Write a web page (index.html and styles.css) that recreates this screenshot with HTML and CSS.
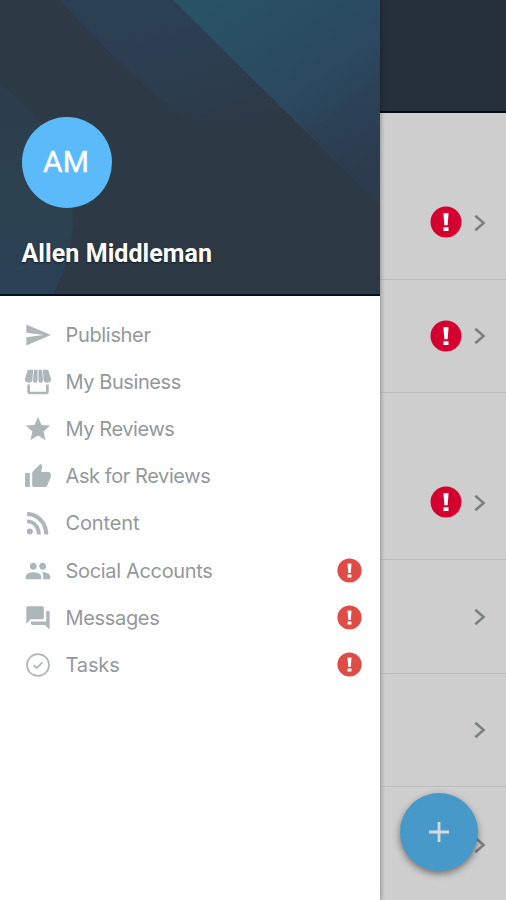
FILE: index.html
```html
<!DOCTYPE html>
<html lang="en">
<head>
<meta charset="utf-8">
<title>Navigation</title>
<link rel="stylesheet" href="styles.css">
</head>
<body>
<svg class="defs" width="0" height="0" aria-hidden="true">
  <symbol id="alert" viewBox="0 0 32 32"><circle cx="16" cy="16" r="15.5" fill="currentColor"/><path class="mark" d="M13.400 7.500q2.600-.9 5.200 0l-1 11.800h-3.200zM13.500 21.200h5v3.700h-5z"/></symbol>
  <symbol id="chevron" viewBox="0 0 12 18"><path d="M1.300 1.700 9.600 9l-8.300 7.300" fill="none" stroke="currentColor" stroke-width="2.500"/></symbol>
</svg>
<div class="screen">
  <aside class="drawer">
    <header class="profile">
      <svg class="backdrop" viewBox="0 0 380 294" preserveAspectRatio="none" aria-hidden="true">
        <defs>
          <linearGradient id="beam" gradientUnits="userSpaceOnUse" x1="215" y1="0" x2="340" y2="180"><stop offset="0" stop-color="#295266"/><stop offset=".55" stop-color="#2b4960"/><stop offset="1" stop-color="#2c3c4d"/></linearGradient>
          <linearGradient id="band" gradientUnits="userSpaceOnUse" x1="180" y1="0" x2="220" y2="135"><stop offset="0" stop-color="#2c4054"/><stop offset=".5" stop-color="#2c3e50"/><stop offset="1" stop-color="#2d3945"/></linearGradient>
          <linearGradient id="disc" x1="0" y1="0" x2="0" y2="1"><stop offset="0" stop-color="#2c3d4d"/><stop offset=".6" stop-color="#2c4250"/><stop offset="1" stop-color="#2c4057"/></linearGradient>
          <linearGradient id="fold" gradientUnits="userSpaceOnUse" x1="350" y1="72" x2="370" y2="205"><stop offset="0" stop-color="#2c425b"/><stop offset="1" stop-color="#2d3a48"/></linearGradient>
        </defs>
        <path d="M60 0H173L306 130Q222 145 166 103Q130 76 60 0z" fill="url(#band)"/>
        <path d="M173 0H380V205z" fill="url(#beam)"/>
        <path d="M380 72 326 119Q314 128 300 126L380 205z" fill="url(#fold)" opacity=".6"/>
        <path d="M0 84Q72 138 73 222Q71 260 53 294H0z" fill="url(#disc)"/>
      </svg>
      <div class="avatar"><span>AM</span></div>
      <div class="name">Allen Middleman</div>
    </header>
    <nav class="menu">
      <a class="item"><svg class="icon" viewBox="0 0 24 24"><path d="M2.010 21 23 12 2.010 3 2 10l15 2-15 2z"/></svg><span class="label">Publisher</span></a>
      <a class="item"><svg class="icon" viewBox="0 0 24 24"><path d="M3.300 1.500h4.500l-.5 8.600q-.3 2.600-3 2.600-3.800-.1-3.500-3.500zM8.500 1.500h3.100v8.700q-.1 2.500-2 2.500-2-.2-1.800-2.500zM12.400 1.500h3.100l.7 8.700q.2 2.300-1.800 2.500-1.900 0-2-2.500zM16.200 1.500h4.500l2.500 7.700q.3 3.400-3.500 3.500-2.700 0-3-2.600zM2.800 14.200h2.300v6.100h13.800v-6.100h2.300v6.300q0 2-2 2H4.800q-2 0-2-2z"/></svg><span class="label tight">My Business</span></a>
      <a class="item"><svg class="icon" viewBox="0 0 24 24"><path d="M12 17.600 18.500 21.600l-1.700-7.500 5.700-5-7.500-.6L12 1.600 9 8.500l-7.500.6 5.700 5-1.700 7.500z"/></svg><span class="label tight">My Reviews</span></a>
      <a class="item"><svg class="icon" viewBox="0 0 24 24"><path d="M1 21.500h4v-12H1v12zm22-11c0-1.100-.9-2-2-2h-6.310l.95-4.570.03-.32c0-.41-.17-.79-.44-1.060L14.170 1.500 7.590 8.090C7.220 8.450 7 8.950 7 9.500v10c0 1.100.9 2 2 2h9c.83 0 1.540-.5 1.840-1.220l3.020-7.050c.09-.23.14-.47.14-.73z"/></svg><span class="label tight">Ask for Reviews</span></a>
      <a class="item"><svg class="icon" viewBox="0 0 24 24"><circle cx="5" cy="19.300" r="2.600"/><path d="M2.600 2.500v3.400c8.500 0 14.800 7 14.800 15.900h3.500C20.900 11 12.700 2.500 2.600 2.500zm0 6.500v3.300c4.900 0 8.400 4.100 8.400 9.500h3.400C14.400 14.500 9.500 9 2.600 9z"/></svg><span class="label loose">Content</span></a>
      <a class="item"><svg class="icon" viewBox="0 0 24 24"><path d="M16 11c1.660 0 2.990-1.340 2.990-3S17.660 5 16 5s-3 1.340-3 3 1.340 3 3 3zm-8 0c1.660 0 2.990-1.340 2.990-3S9.660 5 8 5 5 6.340 5 8s1.340 3 3 3zm0 2c-2.330 0-6.500 1.170-6.500 3.500V19h13.200v-2.500c0-2.330-4.370-3.500-6.700-3.500zm8 0c-.29 0-.62.020-.97.050 1.160.84 1.470 1.970 1.470 3.450V19h6v-2.500c0-2.330-4.170-3.500-6.500-3.500z"/></svg><span class="label">Social Accounts</span><svg class="flag"><use href="#alert"/></svg></a>
      <a class="item"><svg class="icon" viewBox="0 0 24 24"><path d="M21 6h-2v9H6v2c0 .55.45 1 1 1h11l4 4V7c0-.55-.45-1-1-1zm-4 6V3c0-.55-.45-1-1-1H3c-.55 0-1 .45-1 1v14l4-4h10c.55 0 1-.45 1-1z"/></svg><span class="label">Messages</span><svg class="flag"><use href="#alert"/></svg></a>
      <a class="item"><svg class="icon line" viewBox="0 0 24 24"><circle cx="12" cy="12" r="9.400"/><path d="m8.200 12.200 2.700 2.500 4.900-5"/></svg><span class="label loose">Tasks</span><svg class="flag"><use href="#alert"/></svg></a>
    </nav>
  </aside>
  <main class="page">
    <div class="topbar"></div>
    <div class="row tall"><svg class="alert"><use href="#alert"/></svg><svg class="chevron"><use href="#chevron"/></svg></div>
    <div class="row"><svg class="alert"><use href="#alert"/></svg><svg class="chevron"><use href="#chevron"/></svg></div>
    <div class="row tall"><svg class="alert"><use href="#alert"/></svg><svg class="chevron"><use href="#chevron"/></svg></div>
    <div class="row"><svg class="chevron"><use href="#chevron"/></svg></div>
    <div class="row"><svg class="chevron"><use href="#chevron"/></svg></div>
    <div class="row"><svg class="chevron"><use href="#chevron"/></svg></div>
  </main>
  <div class="fab"><svg viewBox="0 0 20 20" width="20" height="20"><path d="M10 0v20M0 10h20" stroke="#d2dadf" stroke-width="2.800"/></svg></div>
</div>
</body>
</html>
```
FILE: styles.css
```css
* { box-sizing: border-box; }
body { margin: 0; background: #fff; }
.defs { position: absolute; }
.screen {
  position: relative;
  display: flex;
  width: 506px;
  height: 900px;
  overflow: hidden;
  font-family: Roboto, "Liberation Sans", sans-serif;
}
.drawer {
  position: relative;
  z-index: 1;
  flex: 0 0 380px;
  background: #fff;
  box-shadow: 1px 0 4px rgba(0, 0, 0, .3);
}
.profile {
  position: relative;
  height: 296px;
  padding: 117px 0 0 22px;
  background: #2d3945;
  border-bottom: 2px solid #080e1c;
}
.backdrop { position: absolute; left: 0; top: 0; width: 380px; height: 294px; }
.avatar {
  position: relative;
  display: flex;
  align-items: center;
  justify-content: center;
  width: 90px;
  height: 91px;
  padding: 0 2px 2px 0;
  border-radius: 50%;
  background: #5abafa;
  color: #fff;
  font-size: 30px;
  -webkit-text-stroke: .4px #fff;
}
.name {
  position: relative;
  margin-top: 31px;
  margin-left: -.5px;
  color: #fff;
  font-size: 25px;
  font-weight: 700;
  letter-spacing: .07px;
  line-height: 30px;
  white-space: nowrap;
  text-shadow: 0 1px 2px #101b2b;
}
.menu { padding-top: 15.5px; }
.item {
  display: flex;
  align-items: center;
  height: 47.1px;
  padding: 0 18px 0 24px;
}
.icon { width: 28px; height: 28px; margin-right: 13.5px; fill: #adb7ba; }
.icon.line { fill: none; stroke: #adb7ba; stroke-width: 1.5; }
.label {
  color: #92999b;
  font-family: Inter, Roboto, sans-serif;
  font-size: 20px;
  letter-spacing: -.33px;
  line-height: 28px;
  white-space: nowrap;
}
.label.tight { letter-spacing: -.42px; }
.label.loose { letter-spacing: -.12px; }
.flag { width: 25px; height: 25px; margin-left: auto; color: #df4b45; }
.mark { fill: #fff; }
.page { flex: 1; background: #cecece; }
.topbar { height: 113px; background: #25303b; border-bottom: 2px solid #080e18; }
.row {
  display: flex;
  align-items: flex-end;
  justify-content: flex-end;
  height: 113.8px;
  padding: 0 20px 40.5px 0;
  border-bottom: 1px solid #bcbcbc;
}
.row:last-child { border-bottom: 0; padding-bottom: 41px; }
.row.tall { height: 166.5px; }
.alert { width: 32px; height: 32px; color: #d4002f; margin-right: 12px; }
.alert .mark { fill: #ddd; }
.chevron { width: 12px; height: 18px; margin-bottom: 6.5px; color: #7c7f80; }
.fab {
  position: absolute;
  z-index: 2;
  left: 400px;
  top: 793px;
  display: flex;
  align-items: center;
  justify-content: center;
  width: 78px;
  height: 78px;
  border-radius: 50%;
  background: #4799ca;
  box-shadow: 0 3px 7px rgba(0, 0, 0, .45);
}
```
